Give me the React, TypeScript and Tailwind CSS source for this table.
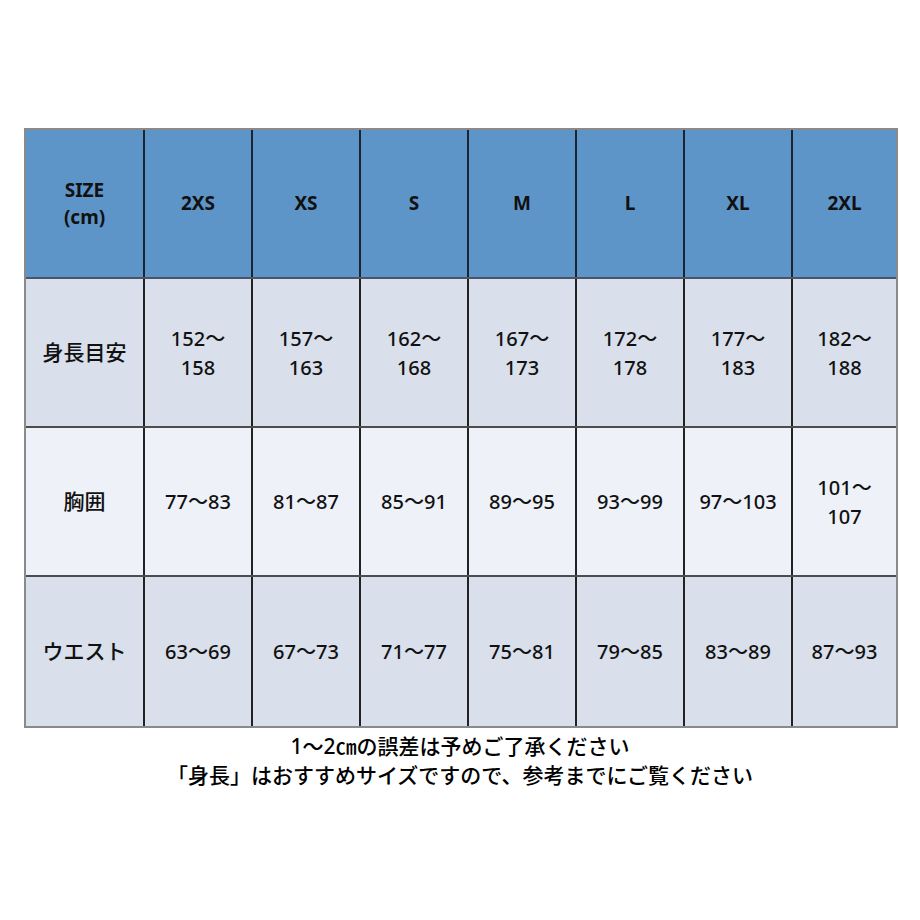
const sizes = ['2XS', 'XS', 'S', 'M', 'L', 'XL', '2XL'];

const rows: { label: string; bg: string; values: string[][] }[] = [
  {
    label: '身長目安',
    bg: 'bg-[#d9dfeb]',
    values: [
      ['152～', '158'],
      ['157～', '163'],
      ['162～', '168'],
      ['167～', '173'],
      ['172～', '178'],
      ['177～', '183'],
      ['182～', '188'],
    ],
  },
  {
    label: '胸囲',
    bg: 'bg-[#eef1f8]',
    values: [['77～83'], ['81～87'], ['85～91'], ['89～95'], ['93～99'], ['97～103'], ['101～', '107']],
  },
  {
    label: 'ウエスト',
    bg: 'bg-[#d9dfeb]',
    values: [['63～69'], ['67～73'], ['71～77'], ['75～81'], ['79～85'], ['83～89'], ['87～93']],
  },
];

const font = { fontFamily: '"Noto Sans", "Noto Sans CJK JP", sans-serif' };

export default function App() {
  return (
    <div className="w-[920px] h-[920px] bg-white pt-[128px] text-[#111]" style={font}>
      <div className="mx-[24px] w-[874px] border-2 border-[#8a8a8a]">
        <div className="grid grid-cols-[117px_repeat(6,108px)_1fr] h-[149px] bg-[#5e95c9] border-b-2 border-[#4a5568]">
          <div className="flex flex-col items-center justify-center text-[19px] font-bold leading-[27px]">
            <span>SIZE</span>
            <span>(cm)</span>
          </div>
          {sizes.map((s) => (
            <div key={s} className="flex items-center justify-center border-l-2 border-[#1c2430] text-[19px] font-bold">
              {s}
            </div>
          ))}
        </div>
        {rows.map((r, i) => (
          <div
            key={r.label}
            className={`grid grid-cols-[117px_repeat(6,108px)_1fr] h-[149px] ${r.bg} ${i < rows.length - 1 ? 'border-b-2 border-[#4d4d4d]' : ''}`}
          >
            <div className="flex items-center justify-center text-[21px] font-medium">{r.label}</div>
            {r.values.map((v, j) => (
              <div key={j} className="flex flex-col items-center justify-center border-l-2 border-[#222] text-[20px] font-medium leading-[29px]">
                {v.map((t) => (
                  <span key={t}>{t}</span>
                ))}
              </div>
            ))}
          </div>
        ))}
      </div>
      <div className="mt-[4px] flex flex-col items-center text-[21px] leading-[29px] font-medium text-black">
        <span>1～2㎝の誤差は予めご了承ください</span>
        <span>「身長」はおすすめサイズですので、参考までにご覧ください</span>
      </div>
    </div>
  );
}
